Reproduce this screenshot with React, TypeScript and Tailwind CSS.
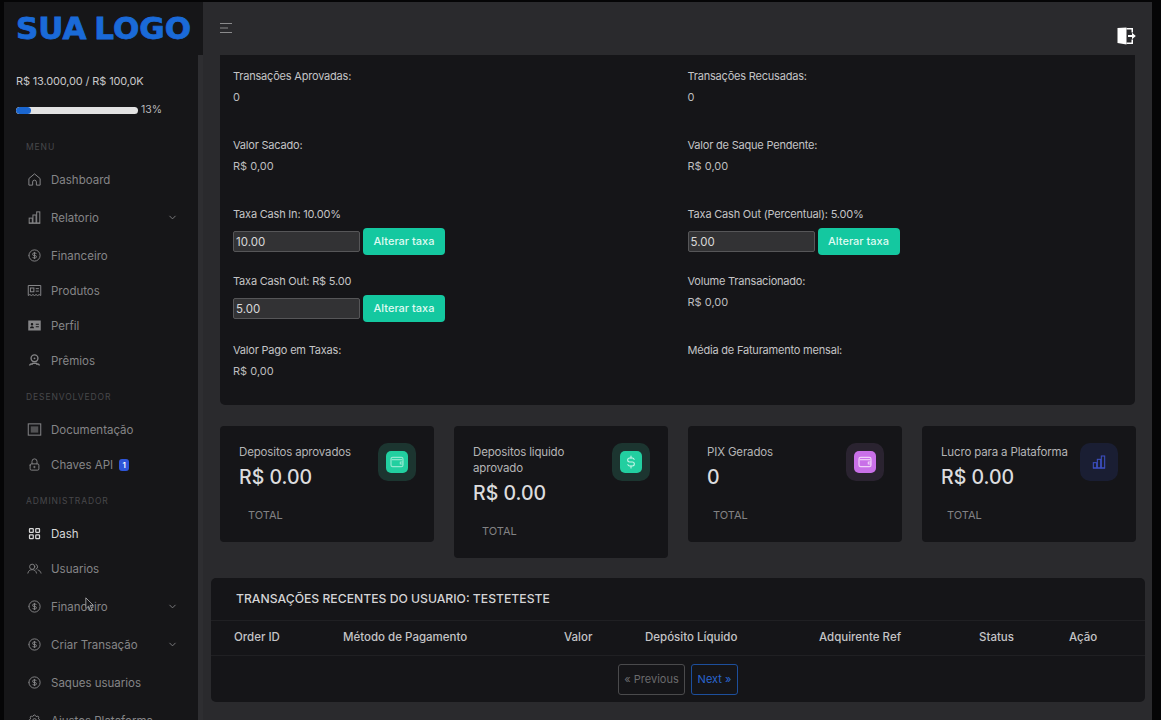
import React from "react";
import { TbCoin, TbLock, TbLayoutGrid, TbChevronDown, TbCurrencyDollar, TbSettings } from "react-icons/tb";

const font = { fontFamily: "Inter, 'Noto Sans', sans-serif" };

type IconProps = { className?: string };

const Home = (p: IconProps) => (
  <svg viewBox="0 0 24 24" fill="none" stroke="currentColor" strokeWidth="1.6" strokeLinejoin="round" className={p.className}>
    <path d="M12 3l9 7.500V21h-6v-5a3 3 0 00-6 0v5H3V10.500z" />
  </svg>
);
const Bars = (p: IconProps) => (
  <svg viewBox="0 0 24 24" fill="none" stroke="currentColor" strokeWidth="1.6" className={p.className}>
    <path d="M3 21h18" />
    <rect x="3.500" y="13" width="5" height="8" />
    <rect x="9.500" y="8" width="5" height="13" />
    <rect x="15.500" y="3" width="5" height="18" />
  </svg>
);
const Ticket = (p: IconProps) => (
  <svg viewBox="0 0 24 24" fill="none" stroke="currentColor" strokeWidth="1.6" className={p.className}>
    <path d="M2 4h20v16l-2.500-1.500L17 20l-2.500-1.500L12 20l-2.500-1.500L7 20l-2.500-1.500L2 20z" />
    <rect x="5.500" y="8" width="5.500" height="6" />
    <path d="M14 9h5M14 13h5" />
  </svg>
);
const Card = (p: IconProps) => (
  <svg viewBox="0 0 24 24" fill="currentColor" className={p.className}>
    <path fillRule="evenodd" d="M2 4h20v16H2zM8 8a2 2 0 100 4 2 2 0 000-4zM4.800 16.500h6.400c0-2-1.400-3.300-3.200-3.300s-3.200 1.300-3.200 3.300zM14 9v1.600h5V9zm0 4v1.600h5V13z" />
  </svg>
);
const Award = (p: IconProps) => (
  <svg viewBox="0 0 24 24" fill="none" stroke="currentColor" strokeWidth="2.200" className={p.className}>
    <circle cx="12" cy="8.500" r="5.500" />
    <circle cx="12" cy="8.500" r="1.500" fill="currentColor" stroke="none" />
    <path d="M4 20c1-3 4-3 5-1.500M20 20c-1-3-4-3-5-1.500M8 16.500h8" />
  </svg>
);
const Doc = (p: IconProps) => (
  <svg viewBox="0 0 24 24" fill="none" stroke="currentColor" strokeWidth="1.600" className={p.className}>
    <rect x="2" y="3" width="20" height="18" />
    <rect x="6" y="7" width="12" height="10" fill="currentColor" fillOpacity="0.55" stroke="none" />
  </svg>
);
const People = (p: IconProps) => (
  <svg viewBox="0 0 26 24" fill="none" stroke="currentColor" strokeWidth="1.600" strokeLinecap="round" className={p.className}>
    <circle cx="9" cy="9" r="4.500" />
    <path d="M1.500 20c.8-4 3.500-6 7.500-6s6.700 2 7.500 6" />
    <path d="M15.500 4.800a4.500 4.500 0 010 8.400M19 14.500c2.800.8 4.700 2.700 5.300 5.500" />
  </svg>
);
const Wallet = (p: IconProps) => (
  <svg viewBox="0 0 24 24" fill="none" stroke="currentColor" strokeWidth="1.800" strokeLinejoin="round" className={p.className}>
    <rect x="3" y="5" width="18" height="14" rx="2.500" />
    <path d="M4 8.500h16" />
    <path d="M21 12h-4v3h4" />
  </svg>
);
const Coin = (p: IconProps) => <TbCoin className={`${p.className} [stroke-width:1.5]`} />;
const Lock = (p: IconProps) => <TbLock className={`${p.className} [stroke-width:1.5]`} />;
const Grid = (p: IconProps) => <TbLayoutGrid className={p.className} />;
const Gear = (p: IconProps) => <TbSettings className={`${p.className} [stroke-width:1.5]`} />;
const Dollar = (p: IconProps) => <TbCurrencyDollar className={`${p.className} [stroke-width:1.6]`} />;

type Item = { label: string; Icon: React.ComponentType<IconProps>; mt?: string; chev?: boolean; active?: boolean; badge?: boolean };

const NavItem = ({ label, Icon, mt, chev, active, badge }: Item) => (
  <div className={`flex h-[35px] items-center pl-[23px] pr-[20px] ${mt ?? ""} ${active ? "text-[#d8d8d8]" : "text-[#858587]"}`}>
    <Icon className="h-[15px] w-[15px] shrink-0" />
    <span className="ml-[9px] text-[11.5px] leading-4">{label}</span>
    {badge && (
      <span className="ml-[6px] flex h-[12px] w-[10px] items-center justify-center rounded-[3px] bg-[#2e55d8] text-[8px] font-semibold text-white">1</span>
    )}
    {chev && <TbChevronDown className="ml-auto h-[11px] w-[11px] text-[#808082]" />}
  </div>
);

const Section = ({ children }: { children: string }) => (
  <div className="mb-[7px] mt-[11px] h-4 pl-[22px] text-[8.5px] leading-4 tracking-[0.9px] text-[#48484b]">{children}</div>
);

const Info = ({ label, value }: { label: string; value?: string }) => (
  <div>
    <div className="text-[11px] leading-4 tracking-[-0.2px] text-[#c4c4c6]">{label}</div>
    {value && <div className="mt-[5px] text-[11px] leading-4 text-[#bdbdbf]">{value}</div>}
  </div>
);

const Rate = ({ label, value }: { label: string; value: string }) => (
  <div>
    <div className="text-[11px] leading-4 tracking-[-0.2px] text-[#c4c4c6]">{label}</div>
    <div className="mt-[6px] flex items-center gap-[3px]">
      <input
        defaultValue={value}
        style={font}
        className="h-[21px] w-[127px] rounded-[2px] border border-[#565658] bg-[#323234] px-[2px] text-[11.5px] text-[#d8d8d8] outline-none"
      />
      <button style={font} className="h-[27px] w-[82px] rounded-[4px] bg-[#14c8a0] text-[11px] font-medium text-[#dffaf2]">Alterar taxa</button>
    </div>
  </div>
);

type StatProps = { label: string; value: string; Icon: React.ComponentType<IconProps>; box: string; inner: string; iconColor: string; labelW?: string; totalPad: string };

const Stat = ({ label, value, Icon, box, inner, iconColor, labelW, totalPad }: StatProps) => (
  <div className="flex rounded-[4px] bg-[#151518] pb-[19px] pl-[19px] pr-[18px] pt-[18px]">
    <div className="min-w-0 flex-1">
      <div className={`text-[11.5px] leading-4 tracking-[-0.15px] text-[#b4b4b6] ${labelW ?? ""}`}>{label}</div>
      <div className="mt-[4px] text-[19.5px] font-medium leading-[26px] text-[#dcdcde]">{value}</div>
      <div className={`mt-[17px] text-[11px] leading-4 text-[#828284] ${totalPad}`}>TOTAL</div>
    </div>
    <div className={`-mt-px ml-1 flex h-[38px] w-[38px] shrink-0 items-center justify-center rounded-[10px] ${box}`}>
      <div className={`flex h-[22px] w-[22px] items-center justify-center rounded-[5px] ${inner}`}>
        <Icon className={`h-[16px] w-[16px] ${iconColor}`} />
      </div>
    </div>
  </div>
);

const columns = [
  ["Order ID", "w-[109px]"],
  ["Método de Pagamento", "w-[221px]"],
  ["Valor", "w-[81px]"],
  ["Depósito Líquido", "w-[174px]"],
  ["Adquirente Ref", "w-[160px]"],
  ["Status", "w-[90px]"],
  ["Ação", "w-[60px]"],
];

export default function App() {
  return (
    <div style={font} className="flex h-[720px] overflow-hidden bg-[#050506] pl-[4px] pr-[9px] pt-[2px]">
      <aside className="flex w-[199px] shrink-0 flex-col bg-[#2e2e31]">
        <div className="flex h-[53px] shrink-0 items-center bg-[#161618] pl-[12px]">
          <span
            style={{ fontFamily: "'DejaVu Sans', sans-serif" }}
            className="text-[31px] font-bold leading-none text-[#1a6ad8] [-webkit-text-stroke:0.8px_#1a6ad8] [word-spacing:-3px]"
          >
            SUA LOGO
          </span>
        </div>
        <div className="mr-[5px] flex-1 overflow-hidden bg-[#161618]">
          <div className="mt-[18px] pl-[12px] text-[11px] leading-4 tracking-[-0.15px] text-[#c8c8ca]">R$ 13.000,00 / R$ 100,0K</div>
          <div className="mt-[13px] flex h-4 items-center pl-[12px]">
            <div className="h-[7px] w-[122px] overflow-hidden rounded-full bg-[#e2e2e2]">
              <div className="h-full w-[15px] rounded-full bg-[#1a66d0]" />
            </div>
            <span className="ml-[3px] text-[10.5px] text-[#b8b8ba]">13%</span>
          </div>
          <div className="h-[10px]" />
          <Section>MENU</Section>
          <NavItem label="Dashboard" Icon={Home} />
          <NavItem label="Relatorio" Icon={Bars} mt="mt-[3px]" chev />
          <NavItem label="Financeiro" Icon={Coin} mt="mt-[3px]" />
          <NavItem label="Produtos" Icon={Ticket} />
          <NavItem label="Perfil" Icon={Card} />
          <NavItem label="Prêmios" Icon={Award} />
          <Section>DESENVOLVEDOR</Section>
          <NavItem label="Documentação" Icon={Doc} />
          <NavItem label="Chaves API" Icon={Lock} badge />
          <Section>ADMINISTRADOR</Section>
          <NavItem label="Dash" Icon={Grid} active />
          <NavItem label="Usuarios" Icon={People} />
          <NavItem label="Financeiro" Icon={Coin} mt="mt-[3px]" chev />
          <NavItem label="Criar Transação" Icon={Coin} mt="mt-[3px]" chev />
          <NavItem label="Saques usuarios" Icon={Coin} mt="mt-[3px]" />
          <NavItem label="Ajustes Plataforma" Icon={Gear} mt="mt-[3px]" />
        </div>
      </aside>

      <main className="flex min-w-0 flex-1 flex-col bg-[#2a2a2d]">
        <header className="flex h-[53px] shrink-0 items-center justify-between pl-[16px] pr-[16px]">
          <svg viewBox="0 0 14 14" className="-mt-[2px] h-[14px] w-[14px] text-[#8a8a8c]" fill="none" stroke="currentColor" strokeWidth="1">
            <path d="M1 2.500h12M1 7h8M1 11.500h12" />
          </svg>
          <svg viewBox="0 0 20 20" className="mt-[14px] h-[20px] w-[20px] text-white" fill="currentColor">
            <path d="M1.500 2l9-0.500V18.500l-9-1.500z" />
            <path d="M10.500 2H17v4.500h-1.500v-3h-5zM10.500 16.500h5v-3H17V18h-6.500z" />
            <path d="M12 9h4V6.800l3.800 3.200-3.800 3.200V11h-4z" />
          </svg>
        </header>

        <section className="mx-[17px] grid grid-cols-[454.5px_1fr] grid-rows-[69px_69px_67px_69px_63px] rounded-b-[5px] bg-[#151518] pl-[13px] pt-[13px]">
          <Info label="Transações Aprovadas:" value="0" />
          <Info label="Transações Recusadas:" value="0" />
          <Info label="Valor Sacado:" value="R$ 0,00" />
          <Info label="Valor de Saque Pendente:" value="R$ 0,00" />
          <Rate label="Taxa Cash In: 10.00%" value="10.00" />
          <Rate label="Taxa Cash Out (Percentual): 5.00%" value="5.00" />
          <Rate label="Taxa Cash Out: R$ 5.00" value="5.00" />
          <Info label="Volume Transacionado:" value="R$ 0,00" />
          <Info label="Valor Pago em Taxas:" value="R$ 0,00" />
          <Info label="Média de Faturamento mensal:" />
        </section>

        <section className="ml-[17px] mr-[16px] mt-[21px] grid grid-cols-4 items-start gap-x-[20px]">
          <Stat label="Depositos aprovados" totalPad="pl-[9px]" value="R$ 0.00" Icon={Wallet} box="bg-[#1c3530]" inner="bg-[#22cfa0]" iconColor="text-[#8fe8cf]" />
          <Stat label="Depositos liquido aprovado" totalPad="pl-[9px]" labelW="max-w-[115px]" value="R$ 0.00" Icon={Dollar} box="bg-[#1c3530]" inner="bg-[#22cfa0]" iconColor="text-[#c9f6e9]" />
          <Stat label="PIX Gerados" totalPad="pl-[6px]" value="0" Icon={Wallet} box="bg-[#2a2330]" inner="bg-[#c970e8]" iconColor="text-[#efcff8]" />
          <Stat label="Lucro para a Plataforma" totalPad="pl-[6px]" value="R$ 0.00" Icon={Bars} box="bg-[#1a1e33]" inner="bg-transparent" iconColor="text-[#3d4fc0]" />
        </section>

        <section className="ml-[8px] mr-[7px] mt-[20px] rounded-[5px] bg-[#151518]">
          <div className="flex h-[43px] items-center border-b border-[#202023] pl-[25px] text-[12.2px] font-medium text-[#d4d4d6]">TRANSAÇÕES RECENTES DO USUARIO: TESTETESTE</div>
          <div className="flex h-[35px] items-center border-b border-[#202023] pl-[23px]">
            {columns.map(([c, w]) => (
              <div key={c} className={`${w} shrink-0 text-[11.5px] font-medium text-[#c4c4c6]`}>{c}</div>
            ))}
          </div>
          <div className="flex h-[46px] justify-center gap-[6px] pt-[8px]">
            <button style={font} className="h-[31px] w-[67px] rounded-[3px] border border-[#4a4a4c] text-[11px] text-[#6a6a6c]">« Previous</button>
            <button style={font} className="h-[31px] w-[47px] rounded-[3px] border border-[#1d4f9c] text-[11px] text-[#2a66d0]">Next »</button>
          </div>
        </section>
      </main>

      <svg viewBox="0 0 12 18" className="absolute left-[85px] top-[597px] h-[15px] w-[10px]">
        <path d="M1 1v13l3.200-3 2.300 5 2-1-2.300-5H10z" fill="#151518" stroke="#b0b0b2" strokeWidth="1" />
      </svg>
    </div>
  );
}
